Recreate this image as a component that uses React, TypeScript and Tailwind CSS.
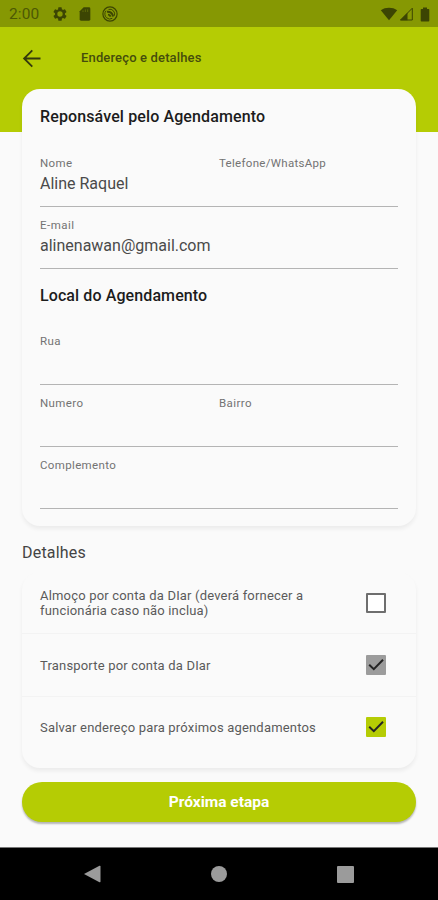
import { useState } from 'react';
import clsx from 'clsx';

interface FieldProps {
  label: string;
  value?: string;
  labelClass?: string;
}

function Field({ label, value, labelClass }: FieldProps) {
  return (
    <div className="flex-1">
      <div className={clsx('h-[14px] text-[11.5px] leading-[14px] text-[#737373]', labelClass)}>{label}</div>
      <div className="mt-[4px] h-[20px] text-[16px] leading-[20px] text-[#4a4a4a]">{value}</div>
    </div>
  );
}

function FieldRow({ children }: { children: React.ReactNode }) {
  return <div className="flex h-[62px] border-b-[1.5px] border-[#b4b4b4] pt-[11px]">{children}</div>;
}

interface CheckRowProps {
  label: string;
  checked: boolean;
  disabled?: boolean;
  className?: string;
  onToggle?: () => void;
}

function CheckRow({ label, checked, disabled, className, onToggle }: CheckRowProps) {
  return (
    <div className={clsx('flex items-center justify-between pr-[30px] pl-[18px]', className)}>
      <span className="w-[285px] text-[13px] leading-[15px] tracking-[0.18px] text-[#5a5a5a]">{label}</span>
      <button
        type="button"
        role="checkbox"
        aria-checked={checked}
        aria-label={label}
        disabled={disabled}
        onClick={onToggle}
        className={clsx(
          'flex size-[20px] items-center justify-center rounded-[1px]',
          !checked && 'border-2 border-[#6e6e6e] bg-white',
          checked && (disabled ? 'bg-[#9c9c9c]' : 'bg-[#b5cc04]'),
        )}
      >
        {checked && (
          <svg width="20" height="20" viewBox="0 0 20 20" fill="none" stroke="#242424" strokeWidth="2">
            <path d="M3.2 9.8 L7.8 14.2 L17 4.8" />
          </svg>
        )}
      </button>
    </div>
  );
}

function StatusBar() {
  return (
    <div className="flex h-[27px] items-center bg-[#869803] pt-px text-[#3c4503]">
      <span className="ml-[9px] w-[43px] text-[15.5px] leading-[20px] tracking-[0.1px] text-[#4d5803]">2:00</span>
      <svg width="16" height="16" viewBox="0 0 24 24" fill="currentColor">
        <path
          fillRule="evenodd"
          d="M19.4 13a7.500 7.500 0 0 0 0-2l2.100-1.650a.5.5 0 0 0 .12-.64l-2-3.460a.5.5 0 0 0-.6-.22l-2.500 1a7.300 7.300 0 0 0-1.700-1l-.38-2.640A.5.5 0 0 0 14 2h-4a.5.5 0 0 0-.5.42L9.120 5.070a7.300 7.300 0 0 0-1.700.98l-2.480-1a.5.5 0 0 0-.6.22l-2 3.460a.5.5 0 0 0 .12.64L4.570 11a8 8 0 0 0 0 2l-2.110 1.650a.5.5 0 0 0-.12.640l2 3.460a.5.5 0 0 0 .6.22l2.500-1a7.300 7.300 0 0 0 1.680.98l.38 2.650A.5.5 0 0 0 10 22h4a.5.5 0 0 0 .5-.42l.38-2.650a7.300 7.300 0 0 0 1.700-.98l2.480 1a.5.5 0 0 0 .6-.22l2-3.460a.5.5 0 0 0-.12-.64zM12 16a4 4 0 1 1 0-8 4 4 0 0 1 0 8z"
        />
      </svg>
      <svg className="ml-[9px]" width="16" height="16" viewBox="0 0 24 24" fill="currentColor">
        <path d="M18 2h-8L4 8v12a2 2 0 0 0 2 2h12a2 2 0 0 0 2-2V4a2 2 0 0 0-2-2z" />
        <path d="M9 6.500v2.500M12.500 5v4M16 5v4" stroke="#65730a" strokeWidth="1.200" />
      </svg>
      <svg className="ml-[9px]" width="16" height="16" viewBox="0 0 16 16" fill="none" stroke="currentColor">
        <circle cx="8" cy="8" r="7.100" strokeWidth="1.200" />
        <path d="M4.600 11.800a5 5 0 0 1-.6-7M6.500 3.400a4.800 4.800 0 0 1 5.800 6.400M4.600 11.800a4.800 4.800 0 0 0 5.700.5" strokeWidth="1" />
        <path d="M5 5.800 C8 5.600 10.400 7.300 11.200 10.400 M6 8.600 C7.200 8.600 8.200 9.400 8.600 10.600" strokeWidth="1.900" />
      </svg>
      <div className="flex-1" />
      <svg width="18" height="14" viewBox="0 0 18 14" fill="currentColor">
        <path d="M9 13.200 L.8 3.200 C5.200-.1 12.800-.1 17.200 3.200 Z" />
      </svg>
      <svg className="ml-px" width="15" height="14" viewBox="0 0 15 14">
        <path d="M1.500 13 L13.300 1.200 V13 Z" fill="none" stroke="currentColor" strokeWidth="1" />
        <path d="M1 13.300 L8.500 5.800 V13.300 Z" fill="currentColor" />
      </svg>
      <svg className="mr-[8px] ml-[6px]" width="10" height="15" viewBox="0 0 10 15" fill="currentColor">
        <path d="M3 0.500h4v1.500h1.500a.8.8 0 0 1 .8.8v10.900a.8.8 0 0 1-.8.8h-7a.8.8 0 0 1-.8-.8V2.800a.8.8 0 0 1 .8-.8H3z" />
      </svg>
    </div>
  );
}

function NavBar() {
  return (
    <div className="h-[53px] border-t border-[#777] bg-black">
      <div className="flex h-full items-center justify-between pr-[84px] pl-[84px]">
        <svg width="17" height="18" viewBox="0 0 17 18" fill="#9b9b9b">
          <path d="M0 9 L15.500 .8 Q16.500 .4 16.500 1.400 V16.600 Q16.500 17.600 15.500 17.200 Z" />
        </svg>
        <div className="size-[16px] rounded-full bg-[#9b9b9b]" />
        <div className="size-[17px] rounded-[1px] bg-[#9b9b9b]" />
      </div>
    </div>
  );
}

export default function App() {
  const [lunch, setLunch] = useState(false);
  const [saveAddress, setSaveAddress] = useState(true);

  return (
    <div className="flex h-[900px] w-[438px] flex-col overflow-hidden bg-[#fafafa] font-['Roboto',sans-serif]">
      <StatusBar />
      <header className="flex h-[105px] shrink-0 items-start bg-[#b5cc04] pt-[21px]">
        <svg className="ml-[22px]" width="20" height="20" viewBox="0 0 20 20" fill="none" stroke="#34390c" strokeWidth="1.800">
          <path d="M18.500 10.500H2.500M10.300 2.300L2.100 10.500l8.200 8.200" />
        </svg>
        <h1 className="ml-[39px] text-[13px] leading-[20px] font-medium tracking-[0.15px] text-[#454d0c]">
          Endereço e detalhes
        </h1>
      </header>

      <main className="-mt-[43px] flex-1 px-[22px]">
        <section className="h-[437px] rounded-[18px] bg-[#fafafa] px-[18px] pt-[18px] shadow-[0_3px_4px_rgba(0,0,0,0.06)]">
          <h2 className="text-[16px] leading-[20px] font-medium tracking-[0.12px] text-[#1c1c1c]">
            Reponsável pelo Agendamento
          </h2>
          <div className="mt-[18px]">
            <FieldRow>
              <Field label="Nome" value="Aline Raquel" labelClass="tracking-[0.4px]" />
              <Field label="Telefone/WhatsApp" labelClass="tracking-[0.3px]" />
            </FieldRow>
            <FieldRow>
              <Field label="E-mail" value="alinenawan@gmail.com" labelClass="tracking-[0.5px]" />
            </FieldRow>
          </div>
          <h2 className="mt-[17px] text-[16px] leading-[20px] font-medium tracking-[0.1px] text-[#1c1c1c]">
            Local do Agendamento
          </h2>
          <div className="mt-[17px]">
            <FieldRow>
              <Field label="Rua" labelClass="tracking-[0.4px]" />
            </FieldRow>
            <FieldRow>
              <Field label="Numero" labelClass="tracking-[0.4px]" />
              <Field label="Bairro" labelClass="tracking-[0.4px]" />
            </FieldRow>
            <FieldRow>
              <Field label="Complemento" labelClass="tracking-[0.35px]" />
            </FieldRow>
          </div>
        </section>

        <h2 className="mt-[17px] text-[16px] leading-[20px] tracking-[0.2px] text-[#444]">Detalhes</h2>

        <section className="mt-[9px] h-[196px] rounded-[18px] bg-[#fafafa] shadow-[0_3px_4px_rgba(0,0,0,0.06)]">
          <CheckRow
            label="Almoço por conta da DIar (deverá fornecer a funcionária caso não inclua)"
            checked={lunch}
            onToggle={() => setLunch(!lunch)}
            className="h-[62px] border-b border-[#f3f3f3]"
          />
          <CheckRow
            label="Transporte por conta da DIar"
            checked
            disabled
            className="h-[63px] border-b border-[#f3f3f3]"
          />
          <CheckRow
            label="Salvar endereço para próximos agendamentos"
            checked={saveAddress}
            onToggle={() => setSaveAddress(!saveAddress)}
            className="h-[60px]"
          />
        </section>

        <button
          type="button"
          className="mt-[14px] h-[40px] w-full rounded-full bg-[#b5cc04] pt-[2px] text-[15.5px] font-bold text-white shadow-[0_2px_2px_rgba(0,0,0,0.28)]"
        >
          Próxima etapa
        </button>
      </main>

      <NavBar />
    </div>
  );
}
